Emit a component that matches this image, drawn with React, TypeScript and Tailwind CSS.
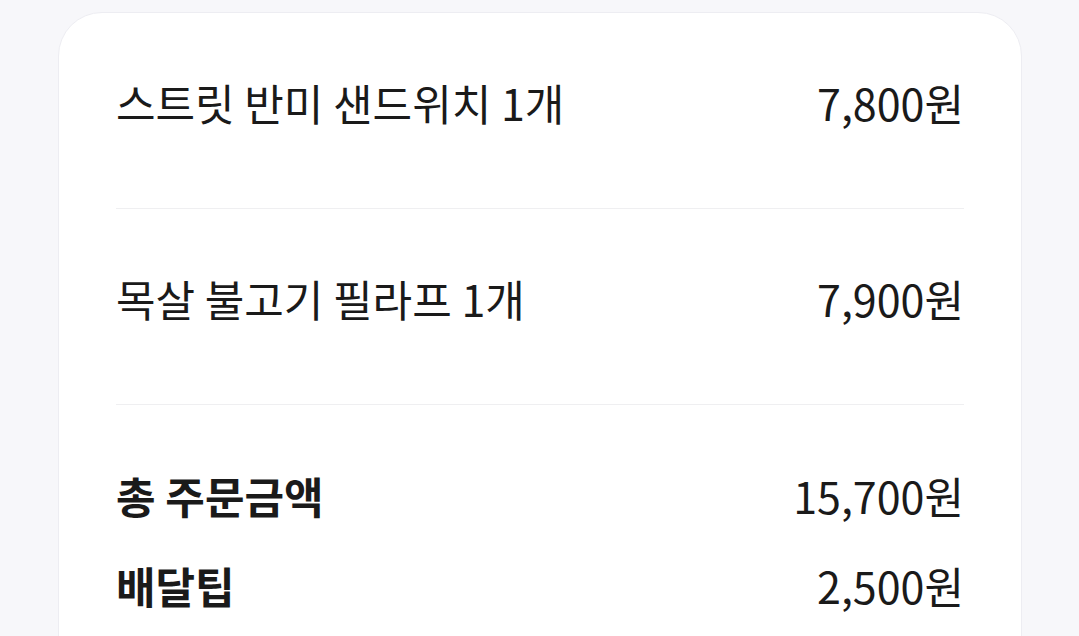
import React from "react";

const items = [
  { name: "스트릿 반미 샌드위치 1개", price: "7,800원" },
  { name: "목살 불고기 필라프 1개", price: "7,900원" },
];

export default function App() {
  return (
    <div
      className="min-h-screen w-full bg-[#f7f7fa] pt-[12px] pl-[58px] pr-[57px]"
      style={{ fontFamily: '"Noto Sans CJK KR", "Noto Sans", sans-serif' }}
    >
      <div className="rounded-t-[44px] border border-[#ededf2] bg-white px-[57px] pb-[40px] text-[#1a1a1a]">
        {items.map((it) => (
          <div key={it.name} className="border-b border-[#efeff1] pt-[61px] pb-[78px]">
            <div className="flex items-center justify-between text-[43px] leading-[56px]">
              <span className="font-normal">{it.name}</span>
              <span className="font-normal">{it.price}</span>
            </div>
          </div>
        ))}
        <div className="flex flex-col gap-[34px] pt-[62px]">
          <div className="flex items-center justify-between text-[43px] leading-[56px]">
            <span className="font-bold">총 주문금액</span>
            <span className="font-normal">15,700원</span>
          </div>
          <div className="flex items-center justify-between text-[43px] leading-[56px]">
            <span className="font-bold">배달팁</span>
            <span className="font-normal">2,500원</span>
          </div>
        </div>
      </div>
    </div>
  );
}
